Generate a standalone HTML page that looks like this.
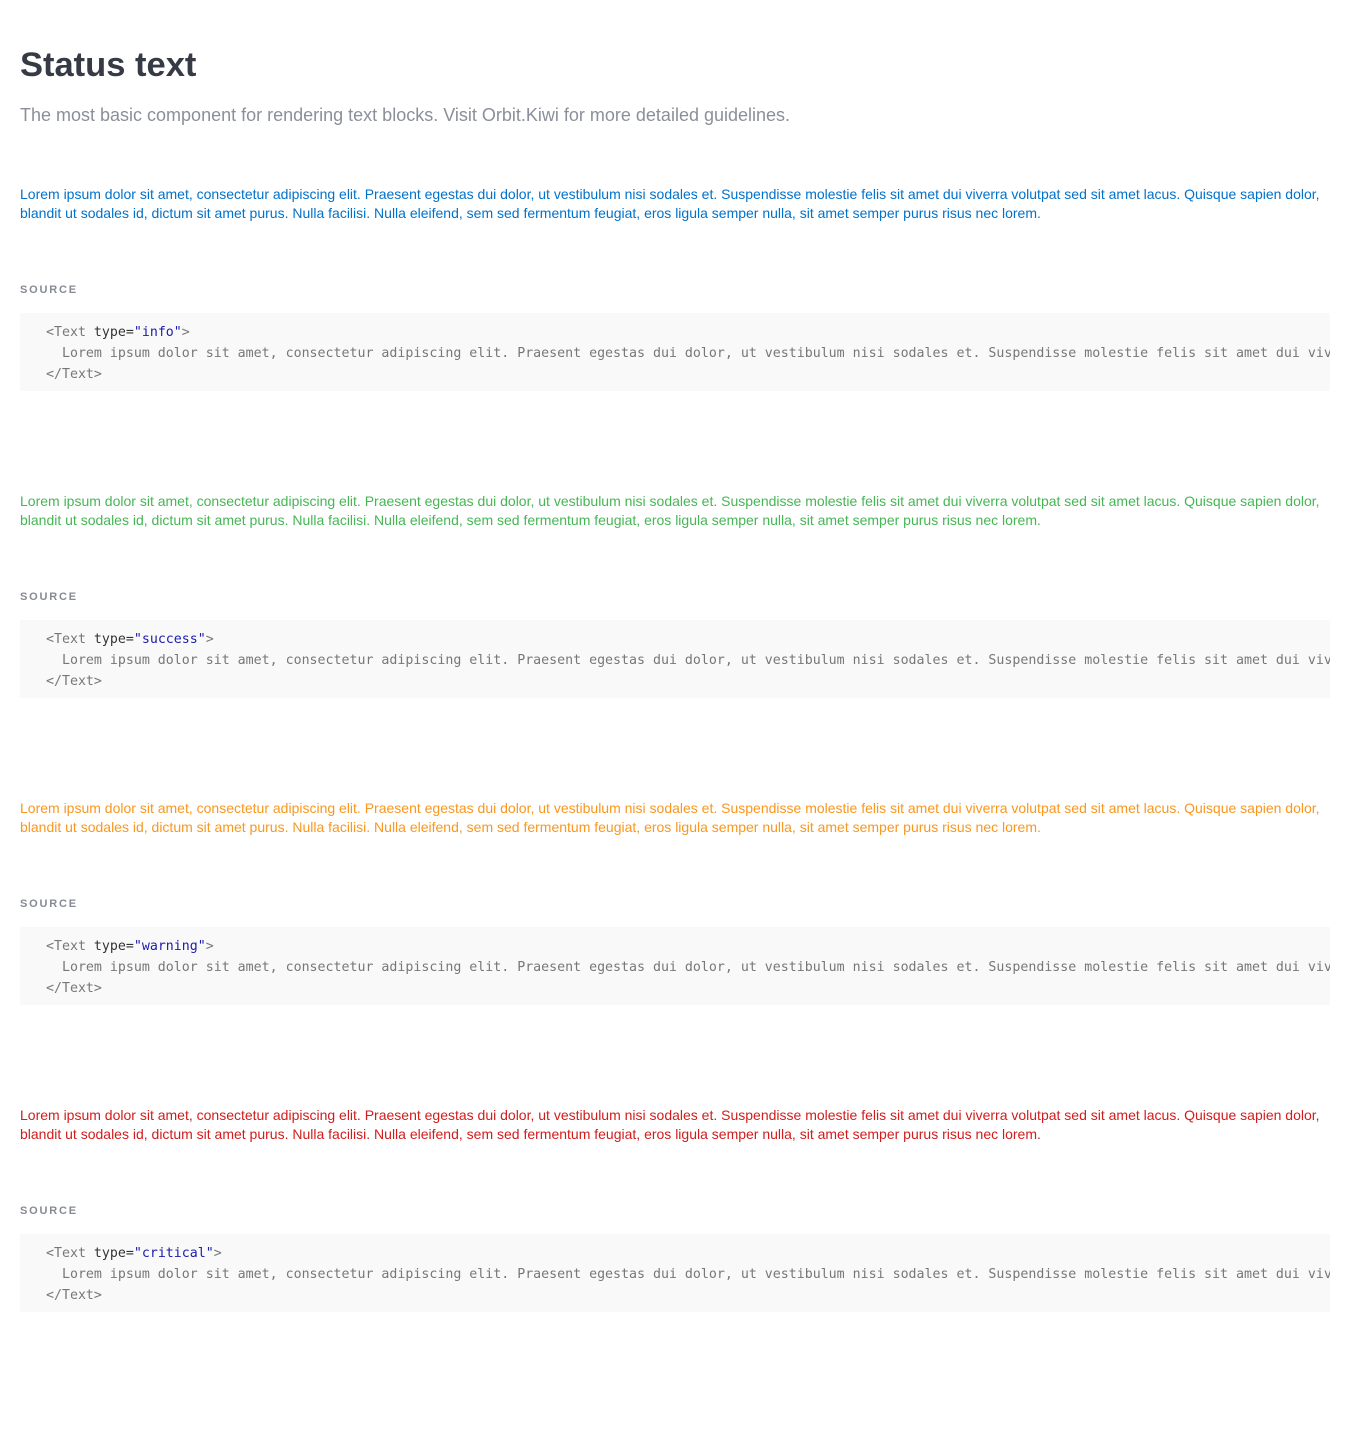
<!DOCTYPE html>
<html><head><meta charset="utf-8"><style>
body{margin:0;background:#fff;width:1350px;height:1433px;position:relative;overflow:hidden;font-family:"Liberation Sans",sans-serif}
h1{position:absolute;left:20px;top:43px;margin:0;font-size:34.5px;font-weight:bold;color:#353a45;line-height:44px}
.sub{position:absolute;left:20px;top:104px;font-size:18px;color:#8b8f99;line-height:22px}
.t{position:absolute;left:20px;font-size:14px;line-height:19px;white-space:nowrap}
.lab{position:absolute;left:20px;font-size:11px;font-weight:bold;letter-spacing:1.8px;color:#868a94}
.code{position:absolute;left:20px;width:1310px;height:78px;background:#f9f9f9;overflow:hidden;font-family:"DejaVu Sans Mono",monospace;font-size:13.28px;line-height:21px;color:#777;white-space:pre;box-sizing:border-box;padding:9px 0 0 26px}
.k{color:#333}.s{color:#1c1cab}
</style></head><body>
<h1>Status text</h1>
<div class="sub">The most basic component for rendering text blocks. Visit Orbit.Kiwi for more detailed guidelines.</div>

<div class="t" style="top:185px;color:#0172cb">Lorem ipsum dolor sit amet, consectetur adipiscing elit. Praesent egestas dui dolor, ut vestibulum nisi sodales et. Suspendisse molestie felis sit amet dui viverra volutpat sed sit amet lacus. Quisque sapien dolor,<br>blandit ut sodales id, dictum sit amet purus. Nulla facilisi. Nulla eleifend, sem sed fermentum feugiat, eros ligula semper nulla, sit amet semper purus risus nec lorem.</div>
<div class="lab" style="top:284px">SOURCE</div>
<div class="code" style="top:313px">&lt;Text <span class="k">type=</span><span class="s">"info"</span>&gt;
  Lorem ipsum dolor sit amet, consectetur adipiscing elit. Praesent egestas dui dolor, ut vestibulum nisi sodales et. Suspendisse molestie felis sit amet dui viverra volutpat
&lt;/Text&gt;</div>

<div class="t" style="top:492px;color:#46b655">Lorem ipsum dolor sit amet, consectetur adipiscing elit. Praesent egestas dui dolor, ut vestibulum nisi sodales et. Suspendisse molestie felis sit amet dui viverra volutpat sed sit amet lacus. Quisque sapien dolor,<br>blandit ut sodales id, dictum sit amet purus. Nulla facilisi. Nulla eleifend, sem sed fermentum feugiat, eros ligula semper nulla, sit amet semper purus risus nec lorem.</div>
<div class="lab" style="top:591px">SOURCE</div>
<div class="code" style="top:620px">&lt;Text <span class="k">type=</span><span class="s">"success"</span>&gt;
  Lorem ipsum dolor sit amet, consectetur adipiscing elit. Praesent egestas dui dolor, ut vestibulum nisi sodales et. Suspendisse molestie felis sit amet dui viverra volutpat
&lt;/Text&gt;</div>

<div class="t" style="top:799px;color:#f9971e">Lorem ipsum dolor sit amet, consectetur adipiscing elit. Praesent egestas dui dolor, ut vestibulum nisi sodales et. Suspendisse molestie felis sit amet dui viverra volutpat sed sit amet lacus. Quisque sapien dolor,<br>blandit ut sodales id, dictum sit amet purus. Nulla facilisi. Nulla eleifend, sem sed fermentum feugiat, eros ligula semper nulla, sit amet semper purus risus nec lorem.</div>
<div class="lab" style="top:898px">SOURCE</div>
<div class="code" style="top:927px">&lt;Text <span class="k">type=</span><span class="s">"warning"</span>&gt;
  Lorem ipsum dolor sit amet, consectetur adipiscing elit. Praesent egestas dui dolor, ut vestibulum nisi sodales et. Suspendisse molestie felis sit amet dui viverra volutpat
&lt;/Text&gt;</div>

<div class="t" style="top:1106px;color:#d21c1c">Lorem ipsum dolor sit amet, consectetur adipiscing elit. Praesent egestas dui dolor, ut vestibulum nisi sodales et. Suspendisse molestie felis sit amet dui viverra volutpat sed sit amet lacus. Quisque sapien dolor,<br>blandit ut sodales id, dictum sit amet purus. Nulla facilisi. Nulla eleifend, sem sed fermentum feugiat, eros ligula semper nulla, sit amet semper purus risus nec lorem.</div>
<div class="lab" style="top:1205px">SOURCE</div>
<div class="code" style="top:1234px">&lt;Text <span class="k">type=</span><span class="s">"critical"</span>&gt;
  Lorem ipsum dolor sit amet, consectetur adipiscing elit. Praesent egestas dui dolor, ut vestibulum nisi sodales et. Suspendisse molestie felis sit amet dui viverra volutpat
&lt;/Text&gt;</div>
</body></html>
